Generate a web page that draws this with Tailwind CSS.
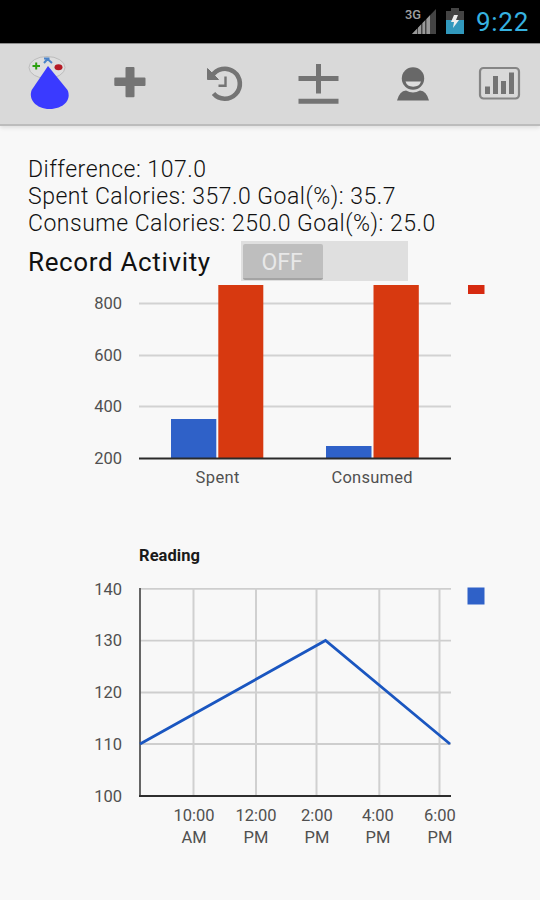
<!DOCTYPE html>
<html lang="en">
<head>
    <meta charset="UTF-8">
    <meta name="viewport" content="width=device-width, initial-scale=1.0">
    <title>Calories</title>
    <script src="https://cdn.jsdelivr.net/npm/@tailwindcss/browser@4"></script>
</head>
<body class="w-[540px] h-[900px] overflow-hidden bg-[#f8f8f8] font-['Roboto',sans-serif] text-[#222]">
    <!-- status bar -->
    <div class="h-[43px] bg-black flex items-center justify-end pr-[11px]">
        <svg class="w-[34px] h-[30px] mr-[10px]" viewBox="0 0 34 30">
            <text x="3" y="12" font-size="13" font-weight="500" textLength="16" lengthAdjust="spacingAndGlyphs" fill="#a0a0a0">3G</text>
            <path d="M10 27L34 2V27Z" fill="#444"/>
            <path d="M10 27L15 21.800V27ZM16 27V20.800L19 17.600V27ZM20.500 27V16.100L23 13.500V27ZM24.500 27V11.900L28 8.300V27Z" fill="#999"/>
        </svg>
        <svg class="w-[18px] h-[28px] mr-[12px]" viewBox="0 0 18 28">
            <path d="M0 3H5V0H13V3H18V12H0Z" fill="#444"/>
            <path d="M0 12H18V26H0Z" fill="#3198bd"/>
            <path d="M8 7H12L10 12H13L7 20L8 14H5Z" fill="#eee"/>
        </svg>
        <span class="text-[26px] leading-[43px] text-[#36b2e0] tracking-[0.7px] pt-[2px]">9:22</span>
    </div>

    <!-- action bar -->
    <div class="h-[83px] bg-[#d9d9d9] border-t border-[#8c8c8c] border-b-2 border-b-[#bcbcbc] shadow-[0_2px_4px_rgba(0,0,0,0.1)]">
        <svg class="w-[540px] h-[80px]" viewBox="0 44 540 80">
            <!-- logo -->
            <ellipse cx="47" cy="67.500" rx="18" ry="11" fill="#dedede" stroke="#bcbcbc"/>
            <path d="M32.500 66H40M36.200 62.500V69.500" stroke="#2da010" stroke-width="2"/>
            <path d="M44 58.500H49.500M48 58.500L44 63M48 59.500L52 63" stroke="#4b83c9" stroke-width="2" fill="none"/>
            <ellipse cx="58.500" cy="67.300" rx="4" ry="3" fill="#b51b25"/>
            <path d="M48 66L31.700 90C28 99 36 109 49.500 109C63 109 72 100 67.500 90Z" fill="#3a3aff"/>
            <!-- add -->
            <path d="M126.500 67h7q1 0 1 1v9.500h10q1 0 1 1v6.500q0 1-1 1h-10v10.200q0 1-1 1h-7q-1 0-1-1V86h-10.200q-1 0-1-1v-6.500q0-1 1-1h10.200v-9.500q0-1 1-1z" fill="#747474"/>
            <!-- history -->
            <path d="M212 76A15 15 0 1 1 213.500 93.500" stroke="#747474" stroke-width="4.600" fill="none"/>
            <path d="M207.500 68.500V79.500H218.500Z" fill="#747474" stroke="#747474" stroke-linejoin="round"/>
            <path d="M225.500 76.500V85.800H218.500" stroke="#747474" stroke-width="2.400" fill="none"/>
            <!-- plus minus -->
            <path d="M298.500 78.500H338.500M318.500 64V93.500M298.500 101.300H338.500" stroke="#747474" stroke-width="5"/>
            <!-- profile -->
            <circle cx="413" cy="78.500" r="11.200" fill="#686868"/>
            <path d="M405.500 81.500H421Q419.500 86.700 413.200 86.700Q407 86.700 405.500 81.500Z" fill="#dedede"/>
            <path d="M397 100.500Q399.500 91 406 90.500Q413 94.500 420 90.500Q426.500 91 429 100.500Z" fill="#686868"/>
            <!-- stats -->
            <rect x="480" y="68" width="39" height="30.500" rx="3.500" stroke="#858585" stroke-width="2.200" fill="none"/>
            <path d="M485 86.500h5v7.500h-5zM493 76h5v18h-5zM501 81h5v13h-5zM509 72.500h5v21.500h-5z" fill="#747474"/>
        </svg>
    </div>

    <!-- summary -->
    <div class="pl-[28px] pt-[30px]">
        <div class="text-[23px] leading-[27px] tracking-[0.5px] font-light text-[#111] whitespace-nowrap">
            <p>Difference: 107.0</p>
            <p>Spent Calories: 357.0 Goal(%): 35.7</p>
            <p>Consume Calories: 250.0 Goal(%): 25.0</p>
        </div>
        <div class="flex h-[48px] pt-[4px]">
            <span class="w-[213px] text-[26px] leading-[42px] tracking-[0.65px] text-[#111] whitespace-nowrap">Record Activity</span>
            <div class="w-[167px] h-[40px] bg-[#dfdfdf] pt-[3px] pl-[2px]">
                <div class="w-[80px] h-[36px] bg-[#bebebe] border-b-2 border-[#a4a4a4] rounded-[2px] pr-[2px] text-center text-[23px] leading-[38px] text-[#e8e8e8]">OFF</div>
            </div>
        </div>
    </div>

    <!-- calories chart, top is clipped by the switch row -->
    <svg class="block w-[540px] h-[235px]" viewBox="0 285 540 235">
        <path d="M139 303.500H451M139 355.500H451M139 406.500H451" stroke="#d2d2d2" stroke-width="2"/>
        <rect x="171" y="419" width="45.300" height="39" fill="#2f61c8"/>
        <rect x="218.300" y="285" width="45" height="173" fill="#d73910"/>
        <rect x="326" y="446" width="45.500" height="12" fill="#2f61c8"/>
        <rect x="373.500" y="285" width="45.300" height="173" fill="#d73910"/>
        <path d="M139 458.500H451" stroke="#2a2a2a" stroke-width="2"/>
        <rect x="468" y="285" width="16.500" height="9" fill="#d62a10"/>
        <g font-size="16.500" fill="#505050" text-anchor="end">
            <text x="122" y="309">800</text>
            <text x="122" y="361">600</text>
            <text x="122" y="412">400</text>
            <text x="122" y="464">200</text>
        </g>
        <g font-size="16.500" fill="#505050" text-anchor="middle">
            <text x="217.500" y="483" textLength="44">Spent</text>
            <text x="372" y="483" textLength="81">Consumed</text>
        </g>
    </svg>

    <!-- reading chart -->
    <svg class="block w-[540px] h-[340px]" viewBox="0 520 540 340">
        <text x="139" y="561" font-size="16.500" font-weight="700" fill="#1a1a1a" textLength="61">Reading</text>
        <path d="M140 588.800H451M140 640.700H451M140 692.500H451M140 744H451" stroke="#cecece" stroke-width="1.800"/>
        <path d="M193.500 588V795M256 588V795M316.500 588V795M379.300 588V795M439.500 588V795" stroke="#d0d0d0" stroke-width="2"/>
        <path d="M140 588V796" stroke="#555" stroke-width="1.800"/>
        <path d="M139 796H451" stroke="#2e2e2e" stroke-width="2"/>
        <path d="M140 744L325.500 640.500L450 744" stroke="#1a56c0" stroke-width="2.800" fill="none"/>
        <rect x="467.500" y="587.500" width="17" height="17" fill="#2f61c8"/>
        <g font-size="16.500" fill="#505050" text-anchor="end">
            <text x="122" y="595">140</text>
            <text x="122" y="646">130</text>
            <text x="122" y="698">120</text>
            <text x="122" y="750">110</text>
            <text x="122" y="802">100</text>
        </g>
        <g font-size="16.500" fill="#505050" text-anchor="middle">
            <text x="194" y="821">10:00</text>
            <text x="194" y="843">AM</text>
            <text x="256" y="821">12:00</text>
            <text x="256" y="843">PM</text>
            <text x="317" y="821">2:00</text>
            <text x="317" y="843">PM</text>
            <text x="378" y="821">4:00</text>
            <text x="378" y="843">PM</text>
            <text x="440" y="821">6:00</text>
            <text x="440" y="843">PM</text>
        </g>
    </svg>
</body>
</html>
